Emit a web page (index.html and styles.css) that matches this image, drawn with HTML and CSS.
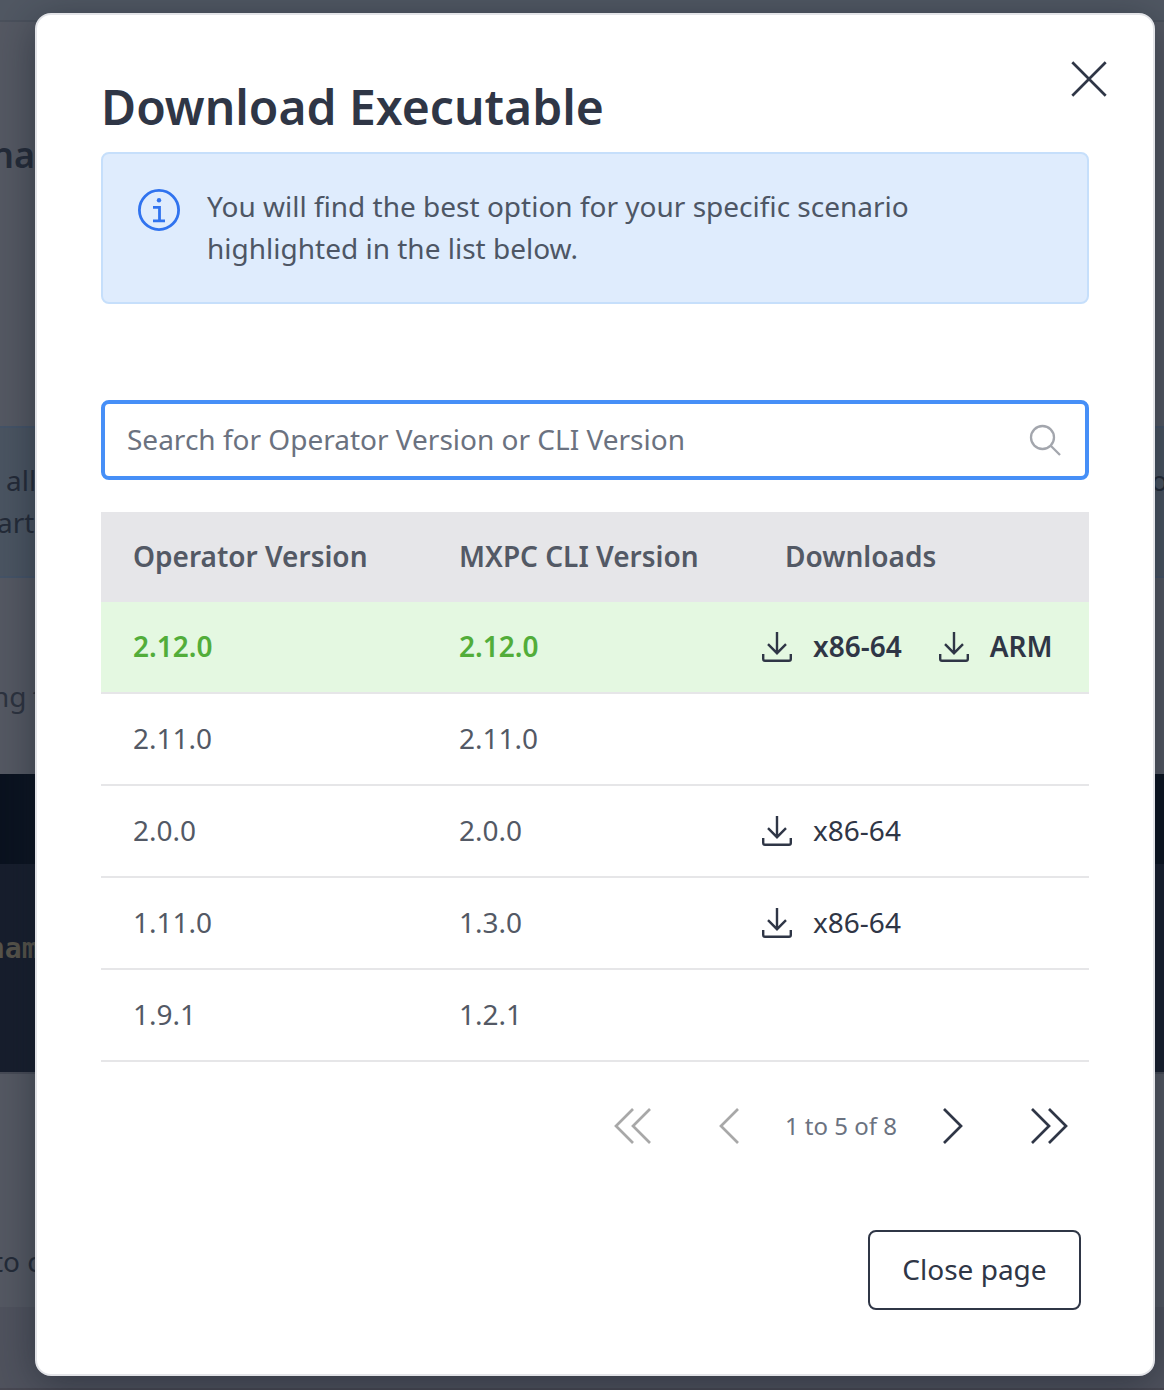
FILE: index.html
```html
<!DOCTYPE html>
<html lang="en">
<head>
<meta charset="utf-8">
<title>Download Executable</title>
<link rel="stylesheet" href="styles.css">
</head>
<body>
<svg class="defs" width="0" height="0">
  <symbol id="download" viewBox="0 0 32 32"><path d="M16 1v21M7 13.200l9 9 9-9" /><path d="M2.200 23v5q0 1.800 1.800 1.800h24q1.800 0 1.800-1.800v-5"/></symbol>
</svg>
<div class="page">
  <div class="topbar"></div>
  <div class="section heading">na</div>
  <div class="notice"><p>all<br><span class="pull">art</span></p><p class="notice-end">o</p></div>
  <div class="section lead">ng t</div>
  <div class="code"><div class="code-head"></div><div class="code-body">nam</div></div>
  <div class="section closing">to c</div>
  <div class="footer"></div>
</div>

<main class="modal">
  <header class="modal-head">
    <h1>Download Executable</h1>
    <button class="dismiss" aria-label="Close"><svg width="36" height="36" viewBox="0 0 36 36"><path d="M1.300 1.300l33.400 33.400M34.700 1.300L1.300 34.700"/></svg></button>
  </header>
  <div class="alert">
    <svg width="42" height="42" viewBox="0 0 42 42"><circle cx="21" cy="21" r="19.600"/><circle class="dot" cx="21" cy="11.300" r="2.200"/><path d="M15 18.300h6.500v13.500M15 31.800h12"/></svg>
    <p>You will find the best option for your specific scenario<br>highlighted in the list below.</p>
  </div>
  <div class="search">
    <span>Search for Operator Version or CLI Version</span>
    <svg width="32" height="32" viewBox="0 0 32 32"><circle cx="13.500" cy="13.500" r="11.500"/><path d="M21.500 21.500l9.500 9.500"/></svg>
  </div>
  <div class="table">
    <div class="row head"><div>Operator Version</div><div>MXPC CLI Version</div><div>Downloads</div></div>
    <div class="row best"><div>2.12.0</div><div>2.12.0</div><div class="links">
      <a><svg width="32" height="32"><use href="#download"/></svg><span>x86-64</span></a>
      <a><svg width="32" height="32"><use href="#download"/></svg><span>ARM</span></a></div></div>
    <div class="row"><div>2.11.0</div><div>2.11.0</div><div></div></div>
    <div class="row"><div>2.0.0</div><div>2.0.0</div><div class="links"><a><svg width="32" height="32"><use href="#download"/></svg><span>x86-64</span></a></div></div>
    <div class="row"><div>1.11.0</div><div>1.3.0</div><div class="links"><a><svg width="32" height="32"><use href="#download"/></svg><span>x86-64</span></a></div></div>
    <div class="row"><div>1.9.1</div><div>1.2.1</div><div></div></div>
  </div>
  <nav class="pager">
    <svg class="off" width="38" height="36" viewBox="0 0 38 36"><path d="M19 1L2 18l17 17M36 1L19 18l17 17"/></svg>
    <svg class="off prev" width="22" height="36" viewBox="0 0 22 36"><path d="M20 1L3 18l17 17"/></svg>
    <span>1 to 5 of 8</span>
    <svg class="next" width="22" height="36" viewBox="0 0 22 36"><path d="M2 1l17 17L2 35"/></svg>
    <svg class="last" width="38" height="36" viewBox="0 0 38 36"><path d="M2 1l17 17L2 35M19 1l17 17-17 17"/></svg>
  </nav>
  <footer class="actions"><button class="close">Close page</button></footer>
</main>
</body>
</html>
```
FILE: styles.css
```css
* { box-sizing: border-box; }
body {
  margin: 0;
  height: 1390px;
  position: relative;
  overflow: hidden;
  font: 28px/42px "Noto Sans", sans-serif;
  color: #535965;
}
h1, p { margin: 0; }
svg { fill: none; stroke: #2f3646; stroke-width: 2.7; flex: none; }
button { font: inherit; background: none; padding: 0; }
.defs { display: none; }

.page { display: flex; flex-direction: column; height: 1390px; background: #555963; color: #242b38; white-space: nowrap; overflow: hidden; }
.page > * { flex: none; }
.topbar { height: 22px; background: #515863; border-bottom: 2px solid #4b515c; }
.heading { height: 404px; padding-top: 109px; font-size: 36px; line-height: 48px; font-weight: 600; margin-left: -9px; }
.notice { height: 152px; display: flex; justify-content: space-between; padding: 31px 0 0 6px; background: #4b5562; border: solid #455468; border-width: 2px 0; }
.pull { margin-left: -9px; }
.notice-end { width: 13px; }
.lead { height: 196px; padding-top: 97px; margin-left: -8px; word-spacing: -1px; color: #2d333f; }
.code { height: 300px; border-bottom: 2px solid #474b56; background: #171e2d; }
.code-head { height: 90px; background: #0a121f; }
.code-body { margin-left: -12px; padding-top: 64px; font: bold 28px/42px "DejaVu Sans Mono", monospace; color: #57544a; }
.closing { height: 233px; padding-top: 166px; margin-left: -7px; }
.footer { height: 83px; background: #50535e; border-bottom: 2px solid #484852; }

.modal {
  position: absolute;
  left: 35px;
  top: 13px;
  width: 1120px;
  height: 1363px;
  padding: 0 64px;
  display: flex;
  flex-direction: column;
  background: #fff;
  border: 2px solid #e3e4e8;
  border-radius: 16px;
  box-shadow: 0 8px 40px rgba(20, 28, 40, .5);
}
.modal-head { height: 137px; display: flex; justify-content: space-between; align-items: flex-start; padding-top: 46px; }
h1 { padding-top: 14px; font-size: 48px; line-height: 64px; font-weight: 600; color: #2f3646; white-space: nowrap; }
.dismiss { border: 0; height: 36px; margin-right: -18px; }
.dismiss svg { display: block; }
.alert { height: 152px; display: flex; gap: 27px; padding: 31px 35px; background: #dfecfd; border: 2px solid #c6dffb; border-radius: 8px; color: #4d5665; white-space: nowrap; }
.alert svg { margin-top: 4px; stroke: #3073ef; stroke-width: 2.800; }
.alert .dot { fill: #3073ef; stroke: none; }
.search { height: 80px; margin: 96px 0 32px; padding: 0 24px 0 22px; display: flex; justify-content: space-between; align-items: center; border: 4px solid #468ff7; border-radius: 8px; color: #6b7280; }
.search span { padding-bottom: 2px; }
.search svg { stroke: #a3a6ad; stroke-width: 2.300; }
.row { height: 92px; display: grid; grid-template-columns: 326px 326px 336px; align-items: center; border-bottom: 2px solid #e6e6e8; }
.row > div { padding: 0 0 2px 32px; white-space: nowrap; }
.row.head { height: 90px; border: 0; background: #e6e6e9; font-weight: 600; }
.row.best { background: #e4f8e1; font-weight: 600; color: #52ad3a; }
.row > .links { padding: 0 0 0 8px; display: flex; gap: 36px; }
.links a { display: flex; align-items: center; gap: 20px; color: #2f3646; }
.links svg { stroke-width: 2.4; }
.links span { padding-bottom: 2px; }
.pager { height: 36px; margin-top: 46px; padding-right: 21px; display: flex; justify-content: flex-end; align-items: center; font-size: 24px; color: #6b7280; }
.off { stroke: #a8a8a8; }
.prev { margin: 0 45px 0 66px; }
.next { margin-left: 45px; }
.last { margin-left: 66px; }
.actions { margin-top: 86px; padding-right: 8px; display: flex; justify-content: flex-end; }
.close { width: 213px; height: 80px; padding-bottom: 2px; border: 2px solid #2f3646; border-radius: 8px; color: #2f3646; }
```
